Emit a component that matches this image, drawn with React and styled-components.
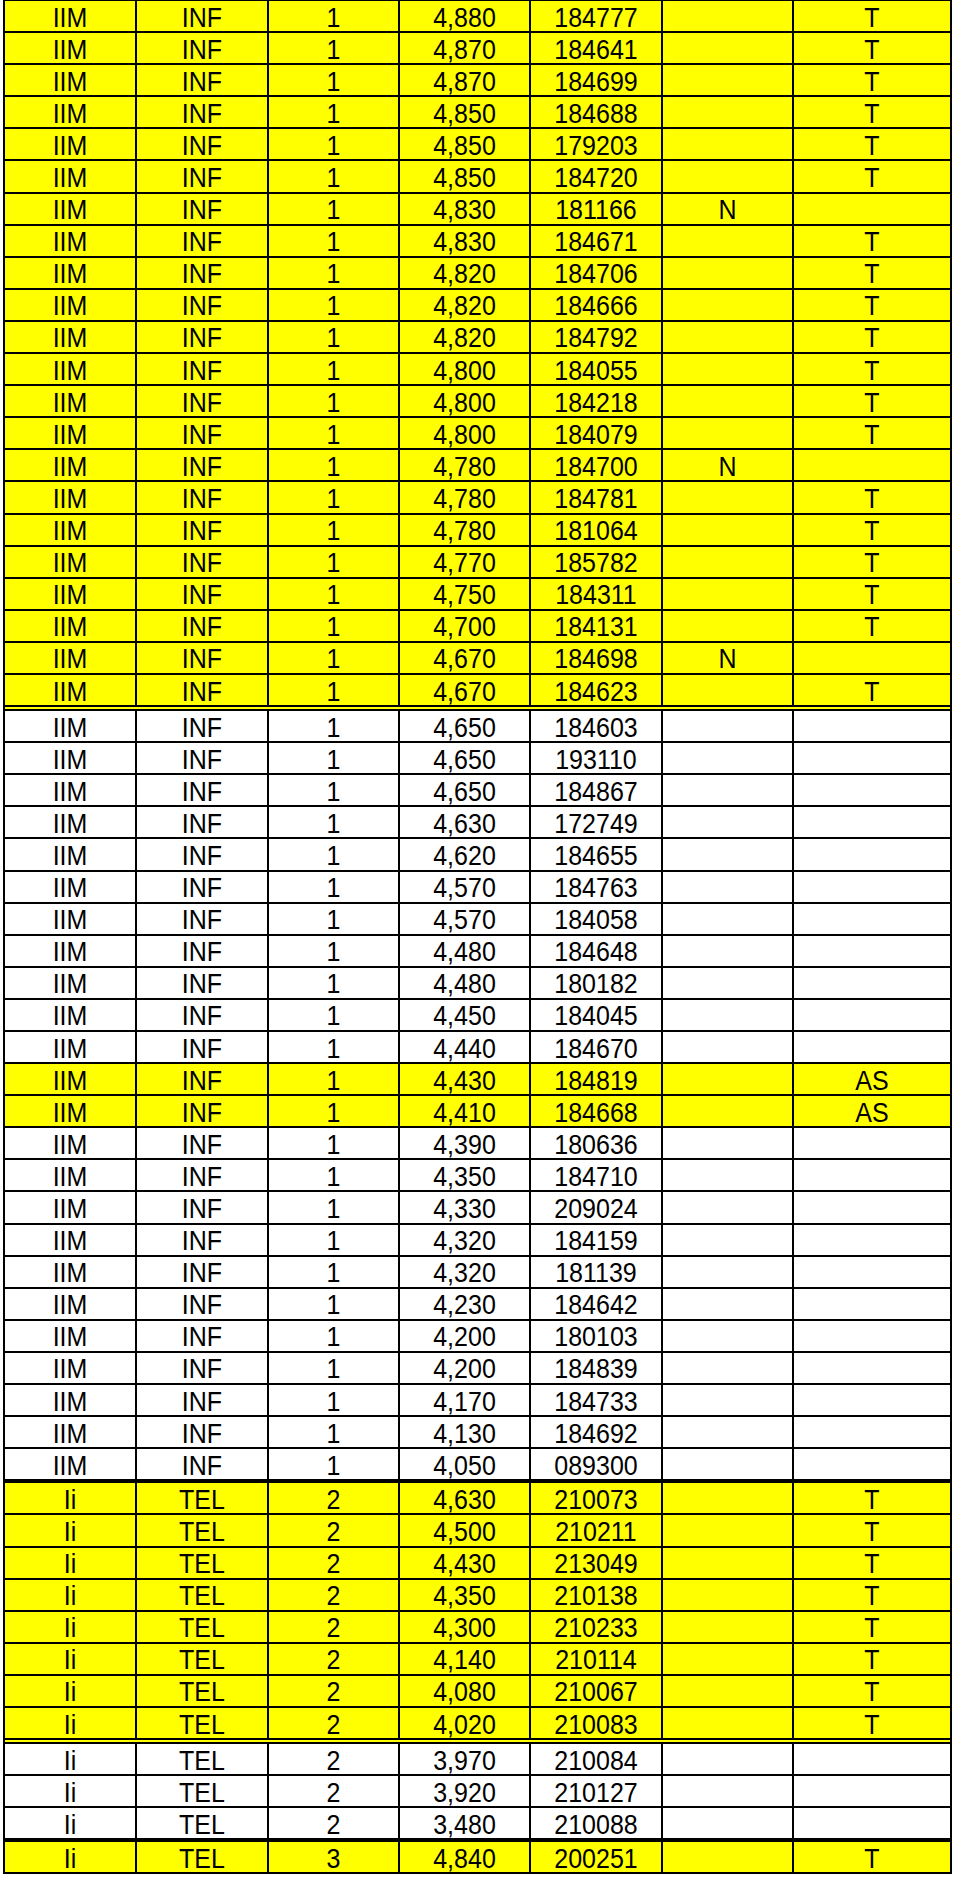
import styled, { createGlobalStyle, css } from "styled-components";

const GlobalStyle = createGlobalStyle`
  body {
    margin: 0;
    background: #fff;
  }
`;

const YELLOW = "#ffff00";

// [group, dept, level, score, id, flagN, flagT, highlight, edge]
const inf = (score, id, n, t, hl, edge) => ["IIM", "INF", "1", score, id, n, t, hl, edge];
const tel = (lvl, score, id, t, hl, edge) => ["Ii", "TEL", lvl, score, id, "", t, hl, edge];

const rows = [
  inf("4,880", "184777", "", "T", true),
  inf("4,870", "184641", "", "T", true),
  inf("4,870", "184699", "", "T", true),
  inf("4,850", "184688", "", "T", true),
  inf("4,850", "179203", "", "T", true),
  inf("4,850", "184720", "", "T", true),
  inf("4,830", "181166", "N", "", true),
  inf("4,830", "184671", "", "T", true),
  inf("4,820", "184706", "", "T", true),
  inf("4,820", "184666", "", "T", true),
  inf("4,820", "184792", "", "T", true),
  inf("4,800", "184055", "", "T", true),
  inf("4,800", "184218", "", "T", true),
  inf("4,800", "184079", "", "T", true),
  inf("4,780", "184700", "N", "", true),
  inf("4,780", "184781", "", "T", true),
  inf("4,780", "181064", "", "T", true),
  inf("4,770", "185782", "", "T", true),
  inf("4,750", "184311", "", "T", true),
  inf("4,700", "184131", "", "T", true),
  inf("4,670", "184698", "N", "", true),
  inf("4,670", "184623", "", "T", true, "double"),
  inf("4,650", "184603", "", ""),
  inf("4,650", "193110", "", ""),
  inf("4,650", "184867", "", ""),
  inf("4,630", "172749", "", ""),
  inf("4,620", "184655", "", ""),
  inf("4,570", "184763", "", ""),
  inf("4,570", "184058", "", ""),
  inf("4,480", "184648", "", ""),
  inf("4,480", "180182", "", ""),
  inf("4,450", "184045", "", ""),
  inf("4,440", "184670", "", ""),
  inf("4,430", "184819", "", "AS", true),
  inf("4,410", "184668", "", "AS", true),
  inf("4,390", "180636", "", ""),
  inf("4,350", "184710", "", ""),
  inf("4,330", "209024", "", ""),
  inf("4,320", "184159", "", ""),
  inf("4,320", "181139", "", ""),
  inf("4,230", "184642", "", ""),
  inf("4,200", "180103", "", ""),
  inf("4,200", "184839", "", ""),
  inf("4,170", "184733", "", ""),
  inf("4,130", "184692", "", ""),
  inf("4,050", "089300", "", "", false, "thick"),
  tel("2", "4,630", "210073", "T", true),
  tel("2", "4,500", "210211", "T", true),
  tel("2", "4,430", "213049", "T", true),
  tel("2", "4,350", "210138", "T", true),
  tel("2", "4,300", "210233", "T", true),
  tel("2", "4,140", "210114", "T", true),
  tel("2", "4,080", "210067", "T", true),
  tel("2", "4,020", "210083", "T", true, "double"),
  tel("2", "3,970", "210084", ""),
  tel("2", "3,920", "210127", ""),
  tel("2", "3,480", "210088", "", false, "thick"),
  tel("3", "4,840", "200251", "T", true),
];

const Sheet = styled.div`
  width: 945px;
  margin-left: 3px;
  border: 2px solid #000;
  border-top-width: 1px;
  font-family: "Liberation Sans", Arial, sans-serif;
  font-size: 25px;
  color: #000;
`;

const edges = {
  double: css`
    border-bottom: 6px double #000;
  `,
  thick: css`
    border-bottom: 4px solid #000;
  `,
};

const Row = styled.div`
  display: grid;
  grid-template-columns: 132px 132px 131px 131px 132px 131px 1fr;
  height: 30.1px;
  box-sizing: content-box;
  background: ${(p) => (p.$highlight ? YELLOW : "#fff")};
  border-bottom: 2px solid #000;
  ${(p) => edges[p.$edge]}

  &:last-child {
    border-bottom: none;
  }
`;

const Cell = styled.div`
  display: flex;
  align-items: center;
  justify-content: center;
  line-height: 1;
  padding-top: 2px;
  border-right: 2px solid #000;

  &:last-child {
    border-right: none;
  }
`;

// the scanned sheet renders glyphs a little taller than Arial
const Value = styled.span`
  display: inline-block;
  transform: scaleY(1.12);
`;

export default function App() {
  return (
    <>
      <GlobalStyle />
      <Sheet>
        {rows.map((r, i) => (
          <Row key={i} $highlight={r[7]} $edge={r[8]}>
            {r.slice(0, 7).map((v, j) => (
              <Cell key={j}>
                <Value>{v}</Value>
              </Cell>
            ))}
          </Row>
        ))}
      </Sheet>
    </>
  );
}
